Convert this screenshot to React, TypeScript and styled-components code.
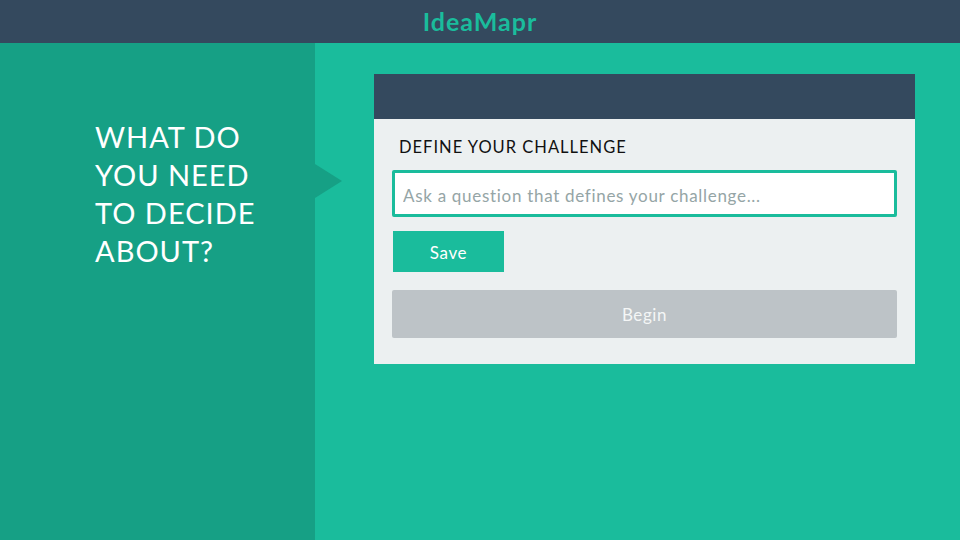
import React from "react";
import styled, { createGlobalStyle } from "styled-components";

const Global = createGlobalStyle`
  html, body { margin: 0; padding: 0; }
  body { font-family: "Lato", "Noto Sans", sans-serif; background: #1abc9c; }
  * { box-sizing: border-box; }
`;

const Page = styled.div`
  width: 960px;
  height: 540px;
  display: flex;
  flex-direction: column;
  overflow: hidden;
`;

const Header = styled.header`
  height: 43px;
  background: #34495e;
  display: flex;
  align-items: center;
  justify-content: center;
  flex-shrink: 0;
`;

const Logo = styled.div`
  color: #1abc9c;
  font-weight: 700;
  font-size: 25px;
  letter-spacing: 1px;
  margin-top: -2px;
`;

const Main = styled.div`
  flex: 1;
  display: flex;
`;

const Side = styled.aside`
  width: 315px;
  background: #16a085;
  position: relative;
  padding: 75px 0 0 95px;
  &::after {
    content: "";
    position: absolute;
    left: 315px;
    top: 121px;
    border-top: 17px solid transparent;
    border-bottom: 17px solid transparent;
    border-left: 27px solid #16a085;
  }
`;

const Question = styled.h1`
  margin: 0;
  color: #fff;
  font-weight: 400;
  font-size: 29px;
  line-height: 38px;
  letter-spacing: 1px;
  width: 180px;
`;

const Content = styled.section`
  flex: 1;
  padding: 31px 0 0 59px;
`;

const Card = styled.div`
  width: 541px;
  background: #ecf0f1;
`;

const CardHead = styled.div`
  height: 45px;
  background: #34495e;
`;

const CardBody = styled.div`
  padding: 18px 18px 26px 18px;
  display: flex;
  flex-direction: column;
`;

const Label = styled.label`
  color: #111;
  font-size: 16.5px;
  letter-spacing: 1px;
  padding-left: 7px;
  line-height: 20px;
  margin-bottom: 13px;
`;

const Input = styled.input`
  height: 47px;
  width: 100%;
  border: 3px solid #1abc9c;
  border-radius: 2px;
  background: #fff;
  font-family: inherit;
  font-size: 17px;
  letter-spacing: 0.7px;
  padding: 3px 8px 0 8px;
  outline: none;
  &::placeholder { color: #95a5a6; }
`;

const Button = styled.button<{ $variant: "save" | "begin" }>`
  border: none;
  font-family: inherit;
  font-size: 17px;
  letter-spacing: 0.6px;
  color: #fff;
  cursor: pointer;
  padding-top: 2px;
  ${(p) =>
    p.$variant === "save"
      ? `width: 111px; height: 41px; background: #1abc9c; margin: 14px 0 0 1px;`
      : `width: 100%; height: 48px; background: #bdc3c7; border-radius: 2px; margin-top: 18px; color: #f4f6f6;`}
`;

export default function App() {
  return (
    <>
      <Global />
      <Page>
        <Header>
          <Logo>IdeaMapr</Logo>
        </Header>
        <Main>
          <Side>
            <Question>WHAT DO YOU NEED TO DECIDE ABOUT?</Question>
          </Side>
          <Content>
            <Card>
              <CardHead />
              <CardBody>
                <Label>DEFINE YOUR CHALLENGE</Label>
                <Input placeholder="Ask a question that defines your challenge..." />
                <Button $variant="save">Save</Button>
                <Button $variant="begin">Begin</Button>
              </CardBody>
            </Card>
          </Content>
        </Main>
      </Page>
    </>
  );
}
